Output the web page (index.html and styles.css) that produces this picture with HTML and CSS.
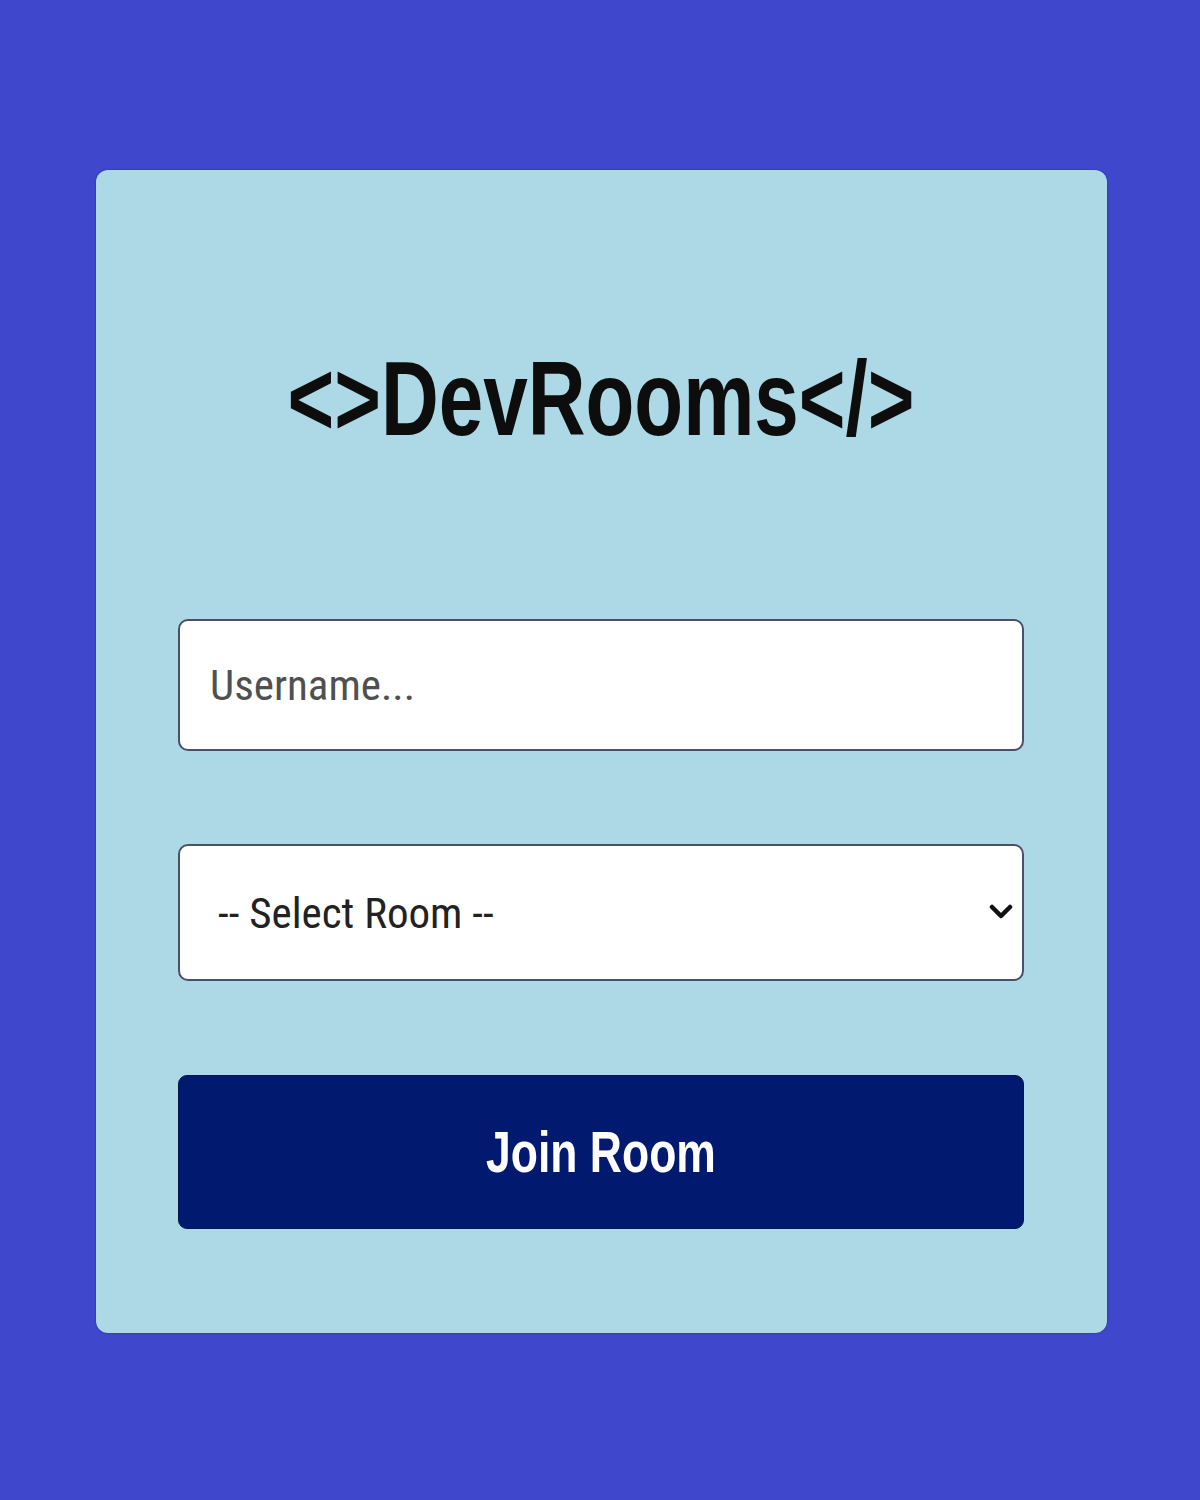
FILE: index.html
```html
<!DOCTYPE html>
<html lang="en">
<head>
<meta charset="utf-8">
<title>DevRooms</title>
<link rel="stylesheet" href="styles.css">
</head>
<body>
  <main class="card">
    <h1 class="title"><span class="title-text">&lt;&gt;DevRooms&lt;/&gt;</span></h1>
    <form class="join-form">
      <input class="field field-input" type="text" placeholder="Username...">
      <div class="select-wrap">
        <select class="field field-select">
          <option>-- Select Room --</option>
          <option>JavaScript</option>
          <option>Python</option>
          <option>PHP</option>
        </select>
        <svg class="chevron" width="24" height="16" viewBox="0 0 24 16" aria-hidden="true">
          <path d="M3 3 L12 12 L21 3" fill="none" stroke="#111" stroke-width="4.5" stroke-linecap="round" stroke-linejoin="round"/>
        </svg>
      </div>
      <button class="btn" type="button"><span class="btn-text">Join Room</span></button>
    </form>
  </main>
</body>
</html>
```
FILE: styles.css
```css
html, body {
  margin: 0;
  padding: 0;
}

body {
  background: #3f48cc;
  font-family: "Liberation Sans", Arial, sans-serif;
  min-height: 1500px;
  padding-top: 170px;
  box-sizing: border-box;
}

.card {
  margin-left: 96px;
  width: 1011px;
  box-sizing: border-box;
  background: #add8e6;
  border-radius: 12px;
  box-shadow: 0 0 2px rgba(10, 20, 80, 0.55);
  padding: 180px 83px 104px 82px;
  display: flex;
  flex-direction: column;
}

.title {
  margin: 0;
  height: 100px;
  display: flex;
  align-items: center;
  justify-content: center;
  font-size: 80px;
  line-height: 100px;
  font-weight: 700;
  color: #0d0d0d;
}

.title-text {
  display: inline-block;
  transform: scaleY(1.31);
}

.join-form {
  margin-top: 169px;
  display: flex;
  flex-direction: column;
}

.field {
  box-sizing: border-box;
  width: 100%;
  background: #fff;
  border: 2px solid #4b4f68;
  border-radius: 10px;
  font-family: Roboto, "Liberation Sans", Arial, sans-serif;
  font-size: 43px;
  font-stretch: 78%;
  outline: none;
  margin: 0;
}

.field-input {
  height: 132px;
  padding: 0 20px 0 30px;
  color: #333;
}

.field-input::placeholder {
  color: #505050;
}

.select-wrap {
  position: relative;
  margin-top: 93px;
}

.field-select {
  height: 137px;
  padding: 0 60px 0 38px;
  color: #222;
  appearance: none;
  -webkit-appearance: none;
}

.chevron {
  position: absolute;
  right: 11px;
  top: 60px;
  pointer-events: none;
}

.btn {
  margin-top: 94px;
  height: 154px;
  width: 100%;
  background: #011a70;
  border: 1px solid #0a1450;
  border-radius: 9px;
  color: #fff;
  font-family: "Liberation Sans", Arial, sans-serif;
  font-weight: 700;
  font-size: 44.5px;
  cursor: pointer;
  padding: 0;
}

.btn-text {
  display: inline-block;
  transform: scaleY(1.3);
}
```
